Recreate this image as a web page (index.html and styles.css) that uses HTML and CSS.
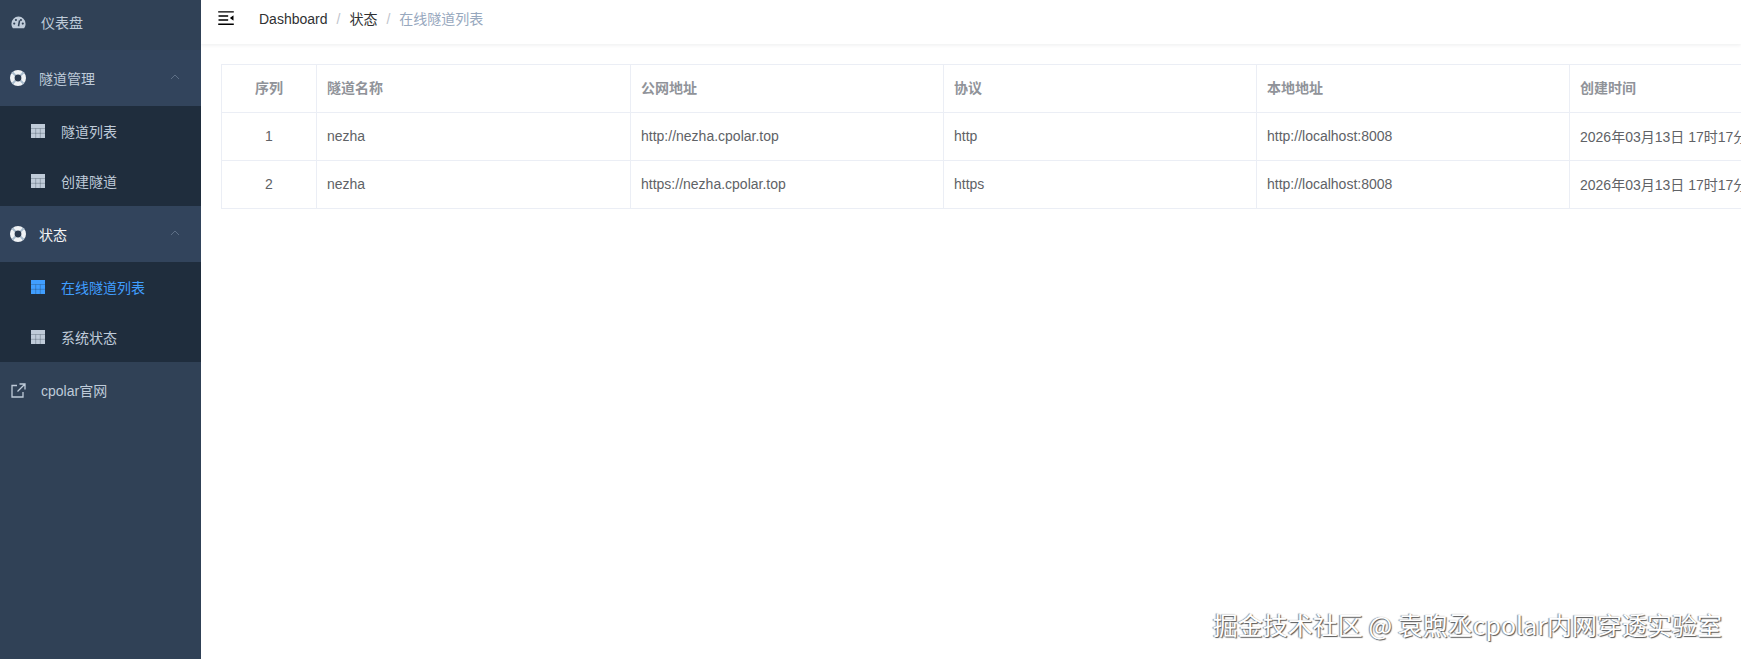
FILE: index.html
```html
<!DOCTYPE html>
<html>
<head>
  <title>在线隧道列表</title>
  <link rel="stylesheet" href="styles.css">
</head>
<body>

  <svg class="defs" width="0" height="0">
    <symbol id="i-table" viewBox="0 0 14 14">
      <path d="M0 0h14v14H0z" fill="currentColor"/>
      <path d="M0 4.500h14M0 9.300h14M4.700 4.500V14M9.300 4.500V14" stroke="#1f2d3d" stroke-width="0.6" fill="none" opacity="0.45"/>
    </symbol>
    <symbol id="i-ring" viewBox="0 0 16 16">
      <circle cx="8" cy="8" r="8" fill="currentColor"/>
      <path d="M2.300 2.300L5.500 5.500M13.700 2.300L10.500 5.500M2.300 13.700L5.500 10.500M13.700 13.700L10.500 10.500" stroke="#a9bccd" stroke-width="2"/>
      <circle cx="8" cy="8" r="3.400" fill="#2a3a4f"/>
    </symbol>
    <symbol id="i-up" viewBox="0 0 10 6">
      <path d="M1 5l4-4 4 4" fill="none" stroke="currentColor" stroke-width="1"/>
    </symbol>
  </svg>

  <div class="app">
    <aside class="sidebar">
      <a class="item first">
        <svg class="icon-top" width="15" height="13" viewBox="0 0 14 12">
          <path d="M7 .5a6.600 6.600 0 0 1 6.600 6.600c0 1.700-.5 3-1.400 4.200H1.800C.9 10.100.4 8.800.4 7.100A6.600 6.600 0 0 1 7 .5z" fill="currentColor"/>
          <circle cx="3" cy="7" r="1" fill="#304156"/>
          <circle cx="4.600" cy="3.700" r="1" fill="#304156"/>
          <circle cx="9.300" cy="3.700" r="1" fill="#304156"/>
          <circle cx="11" cy="7" r="1" fill="#304156"/>
          <path d="M7 9.500L8 4" stroke="#304156" stroke-width="1.400"/>
        </svg>
        <span>仪表盘</span>
      </a>

      <div class="group">
        <div class="group-title">
          <svg class="icon-ring"><use href="#i-ring"/></svg>
          <span>隧道管理</span>
          <svg class="arrow"><use href="#i-up"/></svg>
        </div>
        <a class="sub"><svg class="icon-table"><use href="#i-table"/></svg><span>隧道列表</span></a>
        <a class="sub"><svg class="icon-table"><use href="#i-table"/></svg><span>创建隧道</span></a>
      </div>

      <div class="group">
        <div class="group-title active-title">
          <svg class="icon-ring"><use href="#i-ring"/></svg>
          <span>状态</span>
          <svg class="arrow"><use href="#i-up"/></svg>
        </div>
        <a class="sub active"><svg class="icon-table"><use href="#i-table"/></svg><span>在线隧道列表</span></a>
        <a class="sub"><svg class="icon-table"><use href="#i-table"/></svg><span>系统状态</span></a>
      </div>

      <a class="item">
        <svg class="icon-top" width="15" height="15" viewBox="0 0 15 15">
          <path d="M6 2.500H1v11.500h11V9M8.500 1h5.500v5.500M14 1L6.500 8.500" fill="none" stroke="currentColor" stroke-width="1.300"/>
        </svg>
        <span>cpolar官网</span>
      </a>
    </aside>

    <main class="main">
      <header class="navbar">
        <svg class="hamburger" viewBox="0 0 1024 1024" width="20" height="20">
          <path d="M408 442h480c4.400 0 8-3.600 8-8v-56c0-4.400-3.600-8-8-8H408c-4.400 0-8 3.600-8 8v56c0 4.400 3.600 8 8 8zm-8 204c0 4.400 3.600 8 8 8h480c4.400 0 8-3.600 8-8v-56c0-4.400-3.600-8-8-8H408c-4.400 0-8 3.600-8 8v56zm504-486H120c-4.400 0-8 3.600-8 8v56c0 4.400 3.600 8 8 8h784c4.400 0 8-3.600 8-8v-56c0-4.400-3.600-8-8-8zm0 632H120c-4.400 0-8 3.600-8 8v56c0 4.400 3.600 8 8 8h784c4.400 0 8-3.600 8-8v-56c0-4.400-3.600-8-8-8zM142.400 642.100L298.700 519a8.840 8.840 0 0 0 0-13.900L142.400 381.900c-5.800-4.600-14.400-.5-14.400 6.900v246.300a8.900 8.900 0 0 0 14.400 7z"/>
        </svg>
        <nav class="crumbs">
          <span>Dashboard</span><i>/</i><span>状态</span><i>/</i><span class="current">在线隧道列表</span>
        </nav>
      </header>

      <section class="content">
        <table class="tunnels">
          <colgroup>
            <col class="col-index">
            <col class="col-name"><col class="col-wide"><col class="col-wide"><col class="col-wide"><col class="col-wide">
          </colgroup>
          <thead>
            <tr>
              <th class="center">序列</th>
              <th>隧道名称</th>
              <th>公网地址</th>
              <th>协议</th>
              <th>本地地址</th>
              <th>创建时间</th>
            </tr>
          </thead>
          <tbody>
            <tr>
              <td class="center">1</td>
              <td>nezha</td>
              <td>http://nezha.cpolar.top</td>
              <td>http</td>
              <td>http://localhost:8008</td>
              <td>2026年03月13日 17时17分</td>
            </tr>
            <tr>
              <td class="center">2</td>
              <td>nezha</td>
              <td>https://nezha.cpolar.top</td>
              <td>https</td>
              <td>http://localhost:8008</td>
              <td>2026年03月13日 17时17分</td>
            </tr>
          </tbody>
        </table>
      </section>
    </main>
  </div>

  <div class="watermark">掘金技术社区 @ 袁煦丞cpolar内网穿透实验室</div>

</body>
</html>
```

FILE: styles.css
```css
html, body {
  margin: 0;
  height: 100%;
  overflow: hidden;
  background-color: #fff;
  font-family: "Liberation Sans", "Noto Sans CJK SC", sans-serif;
  font-size: 14px;
}

.defs {
  display: block;
  height: 0;
}

.app {
  display: flex;
  height: 659px;
}

/* sidebar */
.sidebar {
  width: 201px;
  flex-shrink: 0;
  background-color: #304156;
  color: #bfcbd9;
}

.item {
  display: flex;
  align-items: center;
  height: 56px;
  padding-left: 11px;
}

.item.first {
  height: 50px;
  padding-bottom: 6px;
  box-sizing: border-box;
}

.icon-top {
  width: 15px;
  margin-right: 15px;
}

.group-title {
  display: flex;
  align-items: center;
  height: 56px;
  padding-left: 10px;
  background-color: #32445c;
}

.active-title {
  color: #f4f4f5;
}

.icon-ring {
  width: 16px;
  height: 16px;
  margin-right: 13px;
  color: #f0f3f6;
}

.arrow {
  width: 10px;
  height: 6px;
  margin-left: auto;
  margin-right: 21px;
  margin-top: -2px;
  color: #5d6f86;
}

.sub {
  display: flex;
  align-items: center;
  height: 50px;
  padding-left: 31px;
  background-color: #1f2d3d;
}

.icon-table {
  width: 14px;
  height: 14px;
  margin-right: 16px;
  color: #bfcbd9;
}

.sub.active,
.sub.active .icon-table {
  color: #409eff;
}

/* main column */
.main {
  flex: 1;
  min-width: 0;
  overflow: hidden;
}

.navbar {
  display: flex;
  align-items: center;
  height: 44px;
  padding-left: 15px;
  box-shadow: 0 1px 4px rgba(0, 21, 41, 0.08);
  box-sizing: border-box;
  padding-bottom: 8px;
}

.hamburger {
  transform: scaleX(-1);
  margin-right: 23px;
}

.crumbs {
  color: #303133;
}

.crumbs i {
  font-style: normal;
  color: #c0c4cc;
  margin: 0 9px;
}

.crumbs .current {
  color: #97a8be;
}

.content {
  padding: 20px;
}

/* table */
.tunnels {
  border-collapse: collapse;
  table-layout: fixed;
  width: 1661px;
  color: #606266;
}

.col-index {
  width: 95px;
}

.col-name {
  width: 314px;
}

.col-wide {
  width: 313px;
}

.tunnels th,
.tunnels td {
  height: 48px;
  box-sizing: border-box;
  border: 1px solid #ebeef5;
  padding: 0 10px 2px;
  text-align: left;
  white-space: nowrap;
  overflow: hidden;
}

.tunnels th {
  color: #909399;
  font-weight: bold;
  padding-bottom: 4px;
}

.tunnels .center {
  text-align: center;
}

.watermark {
  position: absolute;
  right: 19px;
  bottom: 19px;
  font-family: "Noto Sans CJK SC", sans-serif;
  font-size: 25px;
  line-height: 32px;
  color: #fff;
  text-shadow: 1px 1px 1px #555, -1px 0 1px #888;
  white-space: nowrap;
}
```
